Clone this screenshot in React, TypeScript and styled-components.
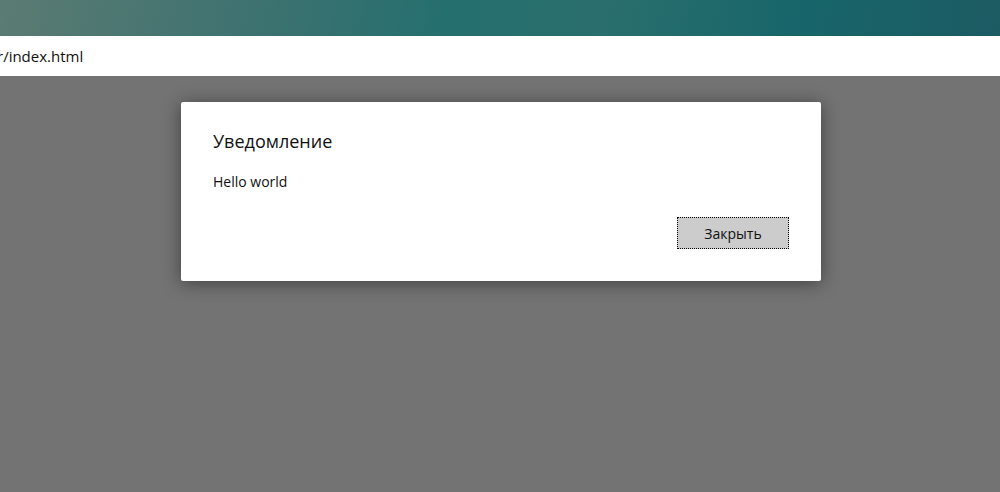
import styled, { createGlobalStyle } from "styled-components";

const GlobalStyle = createGlobalStyle`
  html, body {
    margin: 0;
    padding: 0;
    height: 100%;
    overflow: hidden;
  }
  body {
    font-family: "Open Sans", "Noto Sans", "Liberation Sans", sans-serif;
    background: #737373;
  }
`;

const Page = styled.div`
  width: 1000px;
  height: 492px;
  display: flex;
  flex-direction: column;
`;

const TitleBar = styled.div`
  height: 36px;
  flex-shrink: 0;
  background: linear-gradient(
    100deg,
    #5b7b73 0%,
    #3e7270 25%,
    #256f6f 45%,
    #2a6f6d 60%,
    #17656a 80%,
    #1d5b63 100%
  );
`;

const AddressBar = styled.div`
  height: 40px;
  flex-shrink: 0;
  background: #ffffff;
  display: flex;
  align-items: center;
  overflow: hidden;
`;

const Url = styled.span`
  margin-left: -3px;
  font-size: 15px;
  color: #111;
  white-space: nowrap;
`;

const Overlay = styled.div`
  flex: 1;
  background: #737373;
  display: flex;
  justify-content: center;
  padding-top: 26px;
  padding-left: 2px;
`;

const Dialog = styled.div`
  width: 640px;
  height: 179px;
  box-sizing: border-box;
  background: #ffffff;
  border-radius: 2px;
  box-shadow: 0 2px 18px rgba(0, 0, 0, 0.45);
  padding: 26px 32px 0 32px;
  display: flex;
  flex-direction: column;
`;

const Heading = styled.h2`
  margin: 0;
  font-size: 18px;
  font-weight: 400;
  line-height: 26px;
  color: #111;
`;

const Message = styled.p`
  margin: 18px 0 0 0;
  font-size: 14px;
  line-height: 20px;
  color: #111;
`;

const Actions = styled.div`
  display: flex;
  justify-content: flex-end;
  margin-top: 25px;
`;

const Button = styled.button`
  width: 112px;
  height: 32px;
  box-sizing: border-box;
  background: #cccccc;
  border: 1px dotted #000;
  font-family: inherit;
  font-size: 14px;
  color: #111;
  padding: 0;
  cursor: pointer;
`;

export default function App() {
  return (
    <>
      <GlobalStyle />
      <Page>
        <TitleBar />
        <AddressBar>
          <Url>r/index.html</Url>
        </AddressBar>
        <Overlay>
          <Dialog>
            <Heading>Уведомление</Heading>
            <Message>Hello world</Message>
            <Actions>
              <Button>Закрыть</Button>
            </Actions>
          </Dialog>
        </Overlay>
      </Page>
    </>
  );
}
